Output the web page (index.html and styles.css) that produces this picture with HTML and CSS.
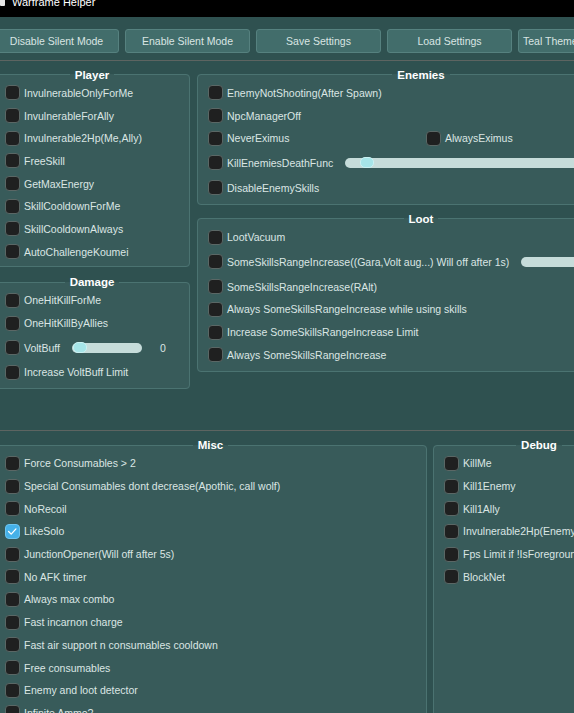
FILE: index.html
```html
<!DOCTYPE html>
<html lang="en">
<head>
<meta charset="utf-8">
<title>Warframe Helper</title>
<link rel="stylesheet" href="styles.css">
</head>
<body>
<div class="titlebar"><span class="appicon"></span><span class="title">Warframe Helper</span></div>
<div class="window">
  <div class="toolbar">
    <button class="btn">Disable Silent Mode</button>
    <button class="btn">Enable Silent Mode</button>
    <button class="btn">Save Settings</button>
    <button class="btn">Load Settings</button>
    <button class="btn combo">Teal Theme</button>
  </div>
  <div class="sep"></div>
  <div class="top">
    <div class="col-left">
      <fieldset class="panel">
        <legend>Player</legend>
        <div class="row"><span class="cb"></span><span class="lbl">InvulnerableOnlyForMe</span></div>
        <div class="row"><span class="cb"></span><span class="lbl">InvulnerableForAlly</span></div>
        <div class="row"><span class="cb"></span><span class="lbl">Invulnerable2Hp(Me,Ally)</span></div>
        <div class="row"><span class="cb"></span><span class="lbl">FreeSkill</span></div>
        <div class="row"><span class="cb"></span><span class="lbl">GetMaxEnergy</span></div>
        <div class="row"><span class="cb"></span><span class="lbl">SkillCooldownForMe</span></div>
        <div class="row"><span class="cb"></span><span class="lbl">SkillCooldownAlways</span></div>
        <div class="row"><span class="cb"></span><span class="lbl">AutoChallengeKoumei</span></div>
      </fieldset>
      <fieldset class="panel pad-b5">
        <legend>Damage</legend>
        <div class="row"><span class="cb"></span><span class="lbl">OneHitKillForMe</span></div>
        <div class="row"><span class="cb"></span><span class="lbl">OneHitKillByAllies</span></div>
        <div class="row tall"><span class="cb"></span><span class="lbl">VoltBuff</span>
          <span class="slider w-volt"><span class="grab" style="left:1px"></span></span><span class="val">0</span></div>
        <div class="row"><span class="cb"></span><span class="lbl">Increase VoltBuff Limit</span></div>
      </fieldset>
    </div>
    <div class="col-right">
      <fieldset class="panel pad-b6">
        <legend>Enemies</legend>
        <div class="row"><span class="cb"></span><span class="lbl">EnemyNotShooting(After Spawn)</span></div>
        <div class="row"><span class="cb"></span><span class="lbl">NpcManagerOff</span></div>
        <div class="row">
          <span class="item first"><span class="cb"></span><span class="lbl">NeverEximus</span></span>
          <span class="item"><span class="cb"></span><span class="lbl">AlwaysEximus</span></span>
        </div>
        <div class="row tall"><span class="cb"></span><span class="lbl">KillEnemiesDeathFunc</span>
          <span class="slider w-enemy"><span class="grab" style="left:15px"></span></span></div>
        <div class="row"><span class="cb"></span><span class="lbl">DisableEnemySkills</span></div>
      </fieldset>
      <fieldset class="panel pad-b6">
        <legend>Loot</legend>
        <div class="row"><span class="cb"></span><span class="lbl">LootVacuum</span></div>
        <div class="row tall"><span class="cb"></span><span class="lbl">SomeSkillsRangeIncrease((Gara,Volt aug...) Will off after 1s)</span>
          <span class="slider w-loot"><span class="grab" style="left:120px"></span></span></div>
        <div class="row"><span class="cb"></span><span class="lbl">SomeSkillsRangeIncrease(RAlt)</span></div>
        <div class="row"><span class="cb"></span><span class="lbl">Always SomeSkillsRangeIncrease while using skills</span></div>
        <div class="row"><span class="cb"></span><span class="lbl">Increase SomeSkillsRangeIncrease Limit</span></div>
        <div class="row"><span class="cb"></span><span class="lbl">Always SomeSkillsRangeIncrease</span></div>
      </fieldset>
    </div>
  </div>
  <div class="sep sep-mid"></div>
  <div class="bottom">
    <fieldset class="panel misc">
      <legend>Misc</legend>
      <div class="row"><span class="cb"></span><span class="lbl">Force Consumables &gt; 2</span></div>
      <div class="row"><span class="cb"></span><span class="lbl">Special Consumables dont decrease(Apothic, call wolf)</span></div>
      <div class="row"><span class="cb"></span><span class="lbl">NoRecoil</span></div>
      <div class="row"><span class="cb on"><svg viewBox="0 0 15 15" width="13" height="13"><polyline points="3,7.5 6,10.5 11.5,4.5" fill="none" stroke="#ffffff" stroke-width="1.5" stroke-linecap="round" stroke-linejoin="round"/></svg></span><span class="lbl">LikeSolo</span></div>
      <div class="row"><span class="cb"></span><span class="lbl">JunctionOpener(Will off after 5s)</span></div>
      <div class="row"><span class="cb"></span><span class="lbl">No AFK timer</span></div>
      <div class="row"><span class="cb"></span><span class="lbl">Always max combo</span></div>
      <div class="row"><span class="cb"></span><span class="lbl">Fast incarnon charge</span></div>
      <div class="row"><span class="cb"></span><span class="lbl">Fast air support n consumables cooldown</span></div>
      <div class="row"><span class="cb"></span><span class="lbl">Free consumables</span></div>
      <div class="row"><span class="cb"></span><span class="lbl">Enemy and loot detector</span></div>
      <div class="row"><span class="cb"></span><span class="lbl">Infinite Ammo?</span></div>
    </fieldset>
    <fieldset class="panel debug">
      <legend>Debug</legend>
      <div class="row"><span class="cb"></span><span class="lbl">KillMe</span></div>
      <div class="row"><span class="cb"></span><span class="lbl">Kill1Enemy</span></div>
      <div class="row"><span class="cb"></span><span class="lbl">Kill1Ally</span></div>
      <div class="row"><span class="cb"></span><span class="lbl">Invulnerable2Hp(Enemy)</span></div>
      <div class="row"><span class="cb"></span><span class="lbl">Fps Limit if !IsForeground</span></div>
      <div class="row"><span class="cb"></span><span class="lbl">BlockNet</span></div>
    </fieldset>
  </div>
</div>
</body>
</html>
```
FILE: styles.css
```css
html, body {
  margin: 0;
  height: 100%;
  overflow: hidden;
  background: #2f5150;
}
body {
  font-family: "Liberation Sans", Arial, sans-serif;
  font-size: 10.5px;
  color: #dbe6e4;
}
.titlebar {
  height: 17px;
  background: #000;
  display: flex;
  align-items: flex-start;
  gap: 7px;
  overflow: hidden;
}
.appicon {
  width: 5px;
  height: 6px;
  background: #e6e6e6;
  border-radius: 0 0 1px 1px;
}
.title {
  color: #fff;
  font-size: 11px;
  line-height: 11px;
  margin-top: -3px;
}
.window {
  width: 651px;
  margin-left: -6px;
  padding-top: 12px;
}
.toolbar {
  display: flex;
  gap: 6px;
  height: 24px;
}
.btn {
  width: 125px;
  box-sizing: border-box;
  background: #426d6b;
  border: 1px solid #56817f;
  border-radius: 3px;
  color: #d9e5e3;
  display: flex;
  align-items: center;
  justify-content: center;
  font: inherit;
  padding: 0;
}
.combo {
  justify-content: flex-start;
  padding-left: 4px;
}
.sep {
  height: 1px;
  background: #5d6461;
  margin-top: 7px;
}
.sep-mid {
  margin-top: 0;
}
.top {
  height: 369px;
  box-sizing: border-box;
  padding-top: 7.5px;
  display: flex;
  gap: 7px;
}
.col-left {
  width: 196px;
  display: flex;
  flex-direction: column;
  gap: 9px;
}
.col-right {
  width: 448px;
  display: flex;
  flex-direction: column;
  gap: 8px;
}
.panel {
  margin: 0;
  padding: 1px 10px 3px;
  border: 1px solid #4b7371;
  border-radius: 4px;
  background: #385b5a;
  min-width: 0;
  box-sizing: border-box;
}
.pad-b5 { padding-bottom: 4px; }
.pad-b6 { padding-bottom: 5px; }
.panel legend {
  margin: 0 auto;
  padding: 0 5px;
  font-weight: bold;
  font-size: 11.5px;
  line-height: 12px;
  color: #fff;
}
.row {
  display: flex;
  align-items: center;
  height: 22.7px;
  white-space: nowrap;
}
.row.tall {
  height: 26.7px;
}
.item {
  display: flex;
  align-items: center;
}
.item.first {
  width: 218px;
}
.cb {
  width: 15px;
  height: 15px;
  box-sizing: border-box;
  border: 1px solid #5a6765;
  background: #1f2020;
  border-radius: 4px;
  flex: none;
  display: flex;
  align-items: center;
  justify-content: center;
}
.cb.on {
  background: #45b1e8;
  border-color: #6cc4ef;
}
.lbl {
  margin-left: 4px;
}
.slider {
  position: relative;
  height: 10px;
  border-radius: 5px;
  background: #c6dcda;
  margin-left: 12px;
  flex: none;
}
.w-volt { width: 70px; }
.w-enemy { width: 290px; }
.w-loot { width: 140px; }
.grab {
  position: absolute;
  top: -0.5px;
  width: 14px;
  height: 11px;
  box-sizing: border-box;
  border-radius: 5px;
  background: #a6e5e8;
  border: 1px solid #c9f1f2;
}
.val {
  margin-left: 18px;
}
.bottom {
  display: flex;
  gap: 6px;
  padding-top: 8px;
}
.misc {
  width: 433px;
  height: 320px;
}
.debug {
  width: 212px;
  height: 320px;
}
```
